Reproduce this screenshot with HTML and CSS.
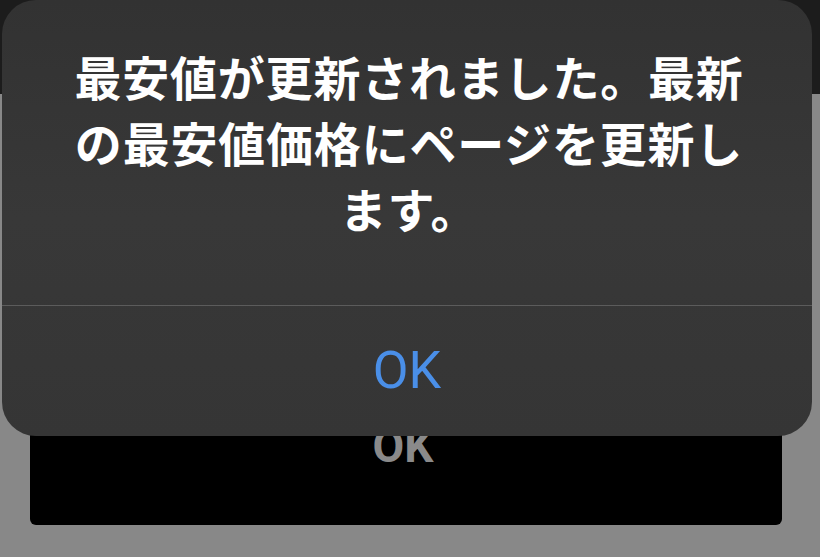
FILE: index.html
```html
<!DOCTYPE html>
<html lang="ja">
<head>
<meta charset="utf-8">
<link rel="stylesheet" href="styles.css">
</head>
<body>
<div class="page">
  <div class="topbar"></div>
  <div class="content">
    <div class="bgbutton"><span>OK</span></div>
  </div>
</div>
<div class="alert">
  <div class="message">最安値が更新されました。最新の最安値価格にページを更新します。</div>
  <div class="action">OK</div>
</div>
</body>
</html>
```
FILE: styles.css
```css
html, body {
  margin: 0;
  padding: 0;
}
body {
  width: 820px;
  height: 557px;
  overflow: hidden;
  background: #888888;
  position: relative;
  font-family: "Noto Sans CJK JP", "Noto Sans", sans-serif;
}
.page {
  display: flex;
  flex-direction: column;
}
.topbar {
  height: 94px;
  background: #1c1c1c;
}
.content {
  padding: 281px 38px 0 30px;
}
.bgbutton {
  height: 150px;
  background: #000;
  border-radius: 6px;
  display: flex;
  align-items: center;
  justify-content: center;
}
.bgbutton span {
  font-family: Roboto, "Liberation Sans", sans-serif;
  font-weight: 700;
  font-size: 46px;
  color: #8a8a8a;
  margin-top: -8px;
  margin-left: -6px;
}
.alert {
  position: absolute;
  left: 2px;
  top: 0;
  width: 810px;
  height: 436px;
  border-radius: 34px;
  background: linear-gradient(180deg, #323232 0%, #383838 50%, #353535 100%);
  display: flex;
  flex-direction: column;
}
.message {
  padding: 43px 64px 0 68px;
  height: 306px;
  box-sizing: border-box;
  border-bottom: 1px solid #5c5c5c;
  color: #ffffff;
  font-weight: 700;
  font-size: 47px;
  line-height: 66px;
  letter-spacing: 0.8px;
  text-align: center;
}
.action {
  flex: 1;
  display: flex;
  align-items: center;
  justify-content: center;
  color: #4a8fe8;
  font-family: Roboto, "Liberation Sans", sans-serif;
  font-size: 52px;
  padding-bottom: 2px;
}
```
